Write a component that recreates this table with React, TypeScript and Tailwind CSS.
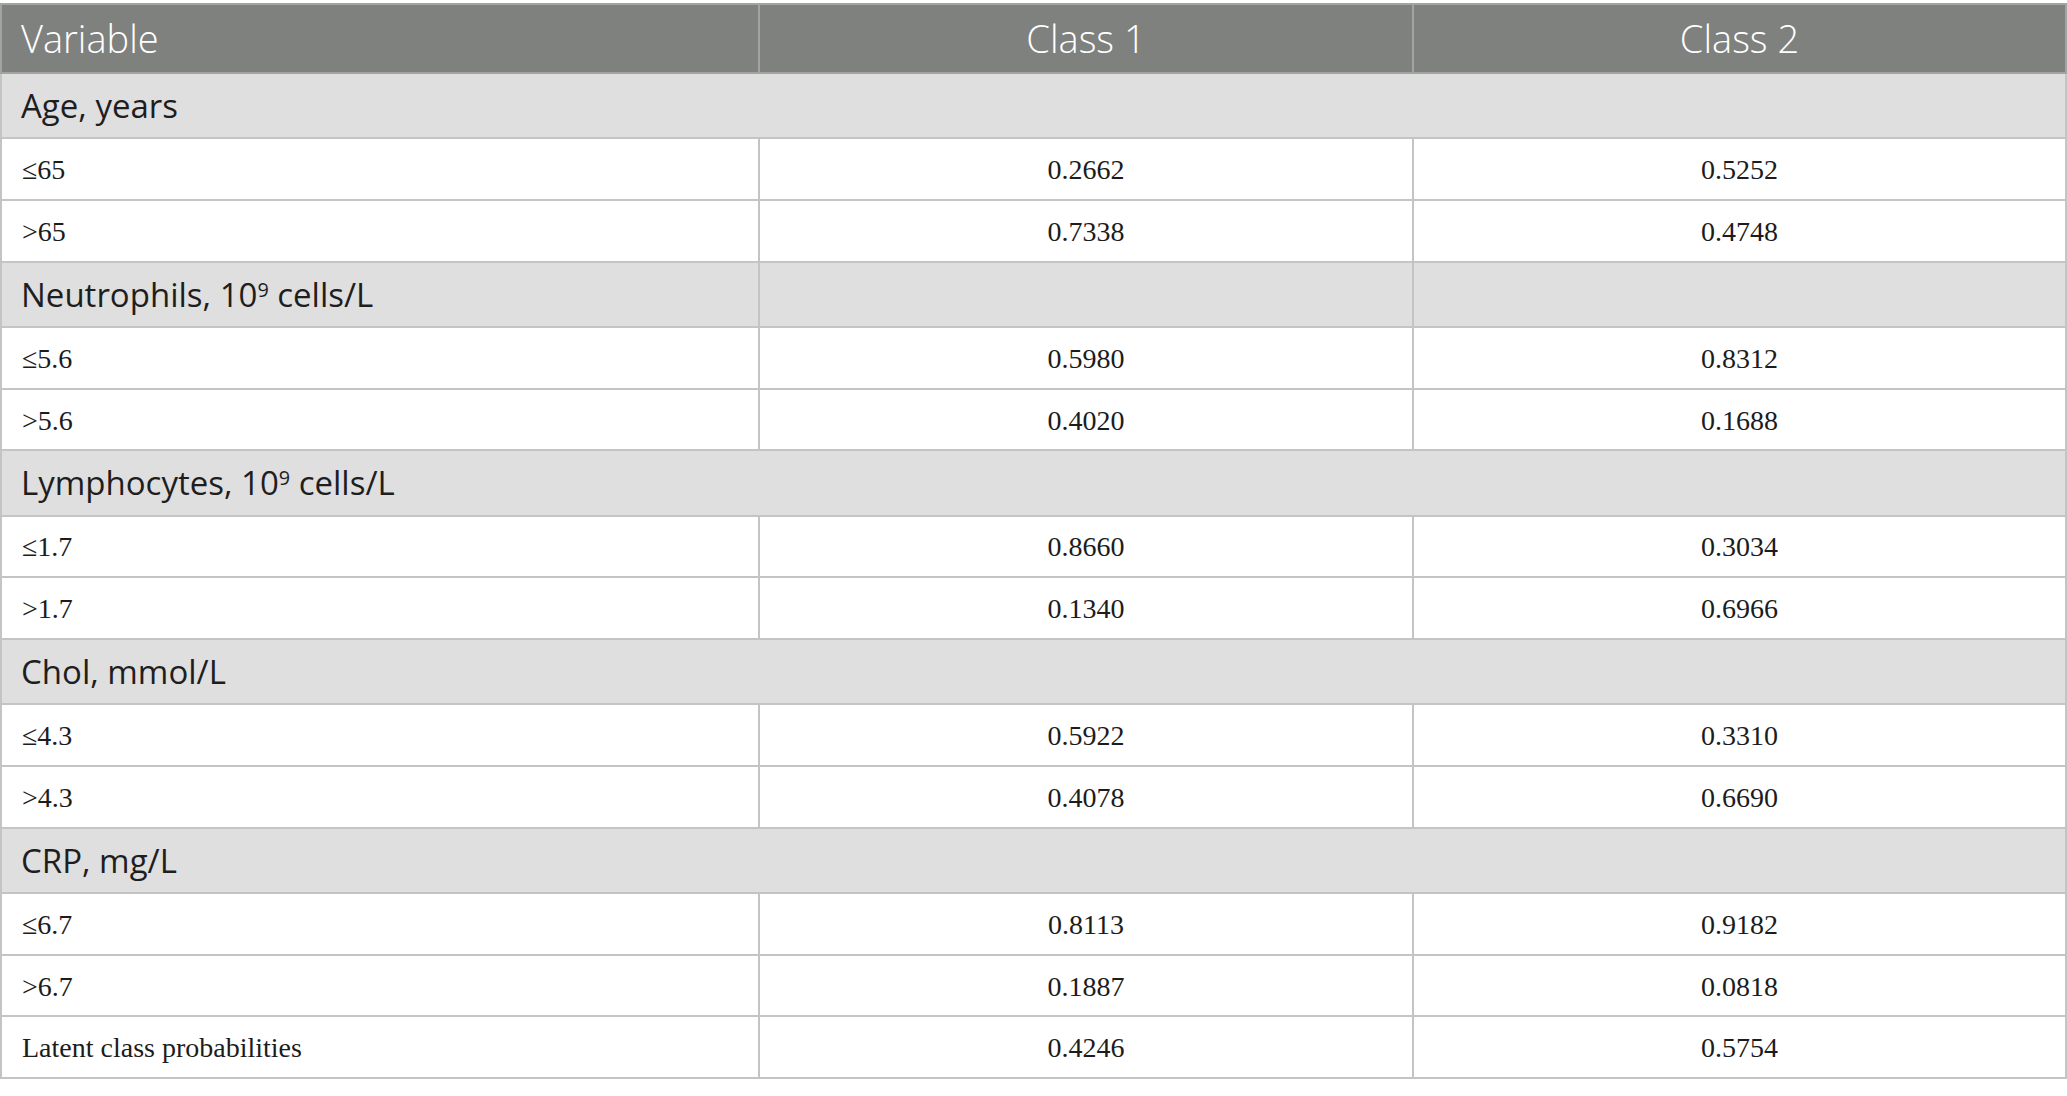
type Row =
  | { kind: "section"; label: React.ReactNode; split?: boolean }
  | { kind: "data"; label: string; c1: string; c2: string }

const rows: Row[] = [
  { kind: "section", label: "Age, years" },
  { kind: "data", label: "≤65", c1: "0.2662", c2: "0.5252" },
  { kind: "data", label: ">65", c1: "0.7338", c2: "0.4748" },
  {
    kind: "section",
    split: true,
    label: (
      <>
        Neutrophils, 10<sup className="text-[0.6em]">9</sup> cells/L
      </>
    ),
  },
  { kind: "data", label: "≤5.6", c1: "0.5980", c2: "0.8312" },
  { kind: "data", label: ">5.6", c1: "0.4020", c2: "0.1688" },
  {
    kind: "section",
    label: (
      <>
        Lymphocytes, 10<sup className="text-[0.6em]">9</sup> cells/L
      </>
    ),
  },
  { kind: "data", label: "≤1.7", c1: "0.8660", c2: "0.3034" },
  { kind: "data", label: ">1.7", c1: "0.1340", c2: "0.6966" },
  { kind: "section", label: "Chol, mmol/L" },
  { kind: "data", label: "≤4.3", c1: "0.5922", c2: "0.3310" },
  { kind: "data", label: ">4.3", c1: "0.4078", c2: "0.6690" },
  { kind: "section", label: "CRP, mg/L" },
  { kind: "data", label: "≤6.7", c1: "0.8113", c2: "0.9182" },
  { kind: "data", label: ">6.7", c1: "0.1887", c2: "0.0818" },
  { kind: "data", label: "Latent class probabilities", c1: "0.4246", c2: "0.5754" },
]

const sans = "font-['Open_Sans','Noto_Sans',sans-serif]"
const serif = "font-['Liberation_Serif','Times_New_Roman',serif]"

export default function App() {
  return (
    <div className="min-h-screen bg-white pt-[3px]">
      <table className="w-full table-fixed border-collapse border-2 border-[#c4c4c4]">
        <colgroup>
          <col className="w-[758px]" />
          <col className="w-[654px]" />
          <col />
        </colgroup>
        <thead>
          <tr className={`h-[69px] bg-[#7f817f] text-white ${sans} text-[38px] font-light`}>
            <th className="border-2 border-[#a3a3a3] px-[19px] text-left font-light">Variable</th>
            <th className="border-2 border-[#a3a3a3] text-center font-light">Class 1</th>
            <th className="border-2 border-[#a3a3a3] text-center font-light">Class 2</th>
          </tr>
        </thead>
        <tbody>
          {rows.map((r, i) =>
            r.kind === "section" ? (
              <tr key={i} className={`h-[65.2px] bg-[#e0dfe0] text-[#1e1e1e] ${sans} text-[33px]`}>
                {r.split ? (
                  <>
                    <td className="border-2 border-[#c4c4c4] px-[19px]">{r.label}</td>
                    <td className="border-2 border-[#c4c4c4]" />
                    <td className="border-2 border-[#c4c4c4]" />
                  </>
                ) : (
                  <td colSpan={3} className="border-2 border-[#c4c4c4] px-[19px]">
                    {r.label}
                  </td>
                )}
              </tr>
            ) : (
              <tr key={i} className={`h-[61.75px] text-[#1c1c1c] ${serif} text-[28px]`}>
                <td className="border-2 border-[#c4c4c4] px-[20px] pt-[2px]">{r.label}</td>
                <td className="border-2 border-[#c4c4c4] pt-[2px] text-center">{r.c1}</td>
                <td className="border-2 border-[#c4c4c4] pt-[2px] text-center">{r.c2}</td>
              </tr>
            )
          )}
        </tbody>
      </table>
    </div>
  )
}
